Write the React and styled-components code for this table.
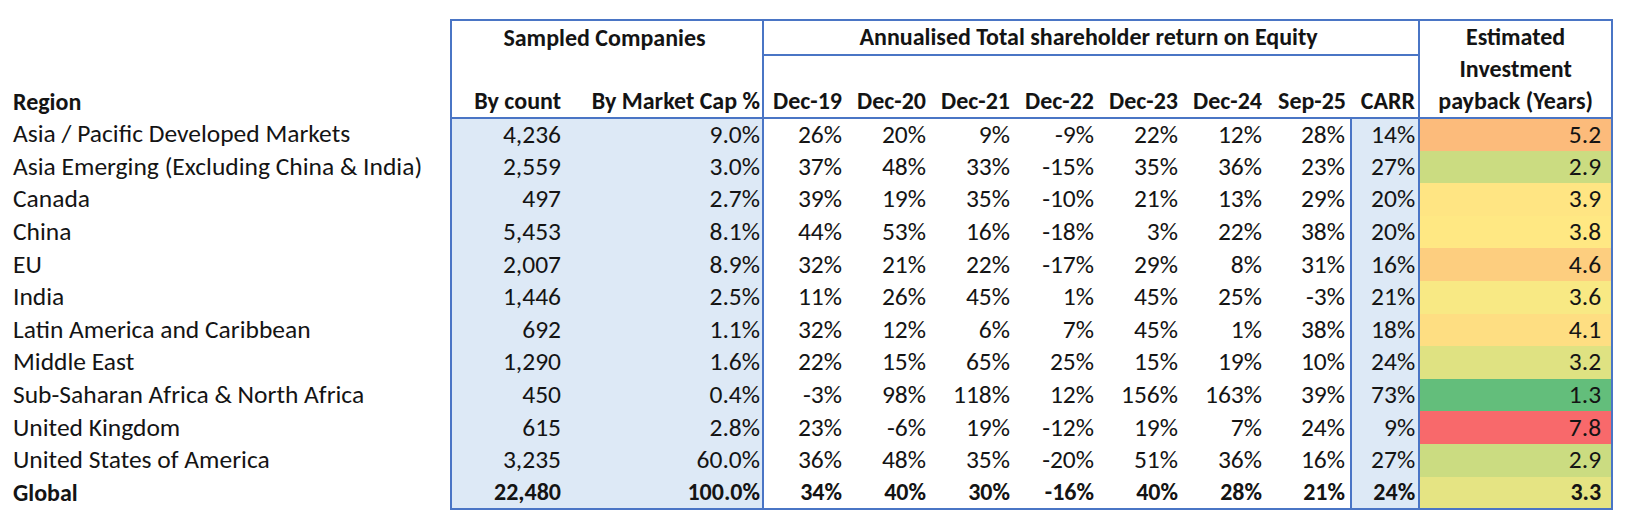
import React from 'react';
import styled, { createGlobalStyle, css } from 'styled-components';

const GlobalStyle = createGlobalStyle`
  body {
    margin: 0;
    background: #ffffff;
  }
`;

const LINE = '2px solid #4a75c5';
const FILL = '#dde9f6';

// Excel style 3 colour scale: green at min, yellow at median, red at max
const scaleColour = (v, values) => {
  const sorted = [...values].sort((a, b) => a - b);
  const n = sorted.length;
  const mid = n % 2 ? sorted[(n - 1) / 2] : (sorted[n / 2 - 1] + sorted[n / 2]) / 2;
  const lo = sorted[0];
  const hi = sorted[n - 1];
  const green = [99, 190, 123];
  const yellow = [255, 235, 132];
  const red = [248, 105, 107];
  const mix = (a, b, t) => a.map((c, i) => Math.round(c + (b[i] - c) * t));
  const rgb = v <= mid ? mix(green, yellow, (v - lo) / (mid - lo)) : mix(yellow, red, (v - mid) / (hi - mid));
  return `rgb(${rgb.join(',')})`;
};

const edges = (p) => css`
  border-top: ${p.$e?.includes('t') ? LINE : 'none'};
  border-right: ${p.$e?.includes('r') ? LINE : 'none'};
  border-bottom: ${p.$e?.includes('b') ? LINE : 'none'};
  border-left: ${p.$e?.includes('l') ? LINE : 'none'};
`;

const Page = styled.div`
  padding-top: 19px;
  font-family: Carlito, Calibri, Lato, 'Liberation Sans', sans-serif;
  font-size: 25.5px;
  color: #141414;
`;

const Table = styled.table`
  border-collapse: collapse;
  table-layout: fixed;
  width: 1612px;
`;

const HeadCell = styled.th`
  font-weight: 700;
  font-size: 24px;
  white-space: nowrap;
  line-height: 32px;
  padding: 0 ${(p) => p.$pr ?? 5}px 0 ${(p) => p.$pl ?? 0}px;
  text-align: ${(p) => p.$align || 'right'};
  vertical-align: ${(p) => p.$valign || 'bottom'};
  ${edges}
`;

const TitleRow = styled.tr`
  height: 32px;
`;

const LabelRow = styled.tr`
  height: 62px;
`;

const BodyRow = styled.tr`
  height: 32.6px;
  font-weight: ${(p) => (p.$total ? 700 : 400)};
  font-size: ${(p) => (p.$total ? '24px' : 'inherit')};
`;

const Cell = styled.td`
  white-space: nowrap;
  line-height: 30px;
  padding: 0 ${(p) => p.$pr ?? 5}px 0 ${(p) => p.$pl ?? 0}px;
  text-align: ${(p) => p.$align || 'right'};
  background: ${(p) => p.$bg || 'transparent'};
  ${edges}
`;

const years = ['Dec-19', 'Dec-20', 'Dec-21', 'Dec-22', 'Dec-23', 'Dec-24', 'Sep-25'];

const rows = [
  { region: 'Asia / Pacific Developed Markets', count: '4,236', cap: '9.0%', tsr: ['26%', '20%', '9%', '-9%', '22%', '12%', '28%'], carr: '14%', payback: 5.2 },
  { region: 'Asia Emerging (Excluding China & India)', count: '2,559', cap: '3.0%', tsr: ['37%', '48%', '33%', '-15%', '35%', '36%', '23%'], carr: '27%', payback: 2.9 },
  { region: 'Canada', count: '497', cap: '2.7%', tsr: ['39%', '19%', '35%', '-10%', '21%', '13%', '29%'], carr: '20%', payback: 3.9 },
  { region: 'China', count: '5,453', cap: '8.1%', tsr: ['44%', '53%', '16%', '-18%', '3%', '22%', '38%'], carr: '20%', payback: 3.8 },
  { region: 'EU', count: '2,007', cap: '8.9%', tsr: ['32%', '21%', '22%', '-17%', '29%', '8%', '31%'], carr: '16%', payback: 4.6 },
  { region: 'India', count: '1,446', cap: '2.5%', tsr: ['11%', '26%', '45%', '1%', '45%', '25%', '-3%'], carr: '21%', payback: 3.6 },
  { region: 'Latin America and Caribbean', count: '692', cap: '1.1%', tsr: ['32%', '12%', '6%', '7%', '45%', '1%', '38%'], carr: '18%', payback: 4.1 },
  { region: 'Middle East', count: '1,290', cap: '1.6%', tsr: ['22%', '15%', '65%', '25%', '15%', '19%', '10%'], carr: '24%', payback: 3.2 },
  { region: 'Sub-Saharan Africa & North Africa', count: '450', cap: '0.4%', tsr: ['-3%', '98%', '118%', '12%', '156%', '163%', '39%'], carr: '73%', payback: 1.3 },
  { region: 'United Kingdom', count: '615', cap: '2.8%', tsr: ['23%', '-6%', '19%', '-12%', '19%', '7%', '24%'], carr: '9%', payback: 7.8 },
  { region: 'United States of America', count: '3,235', cap: '60.0%', tsr: ['36%', '48%', '35%', '-20%', '51%', '36%', '16%'], carr: '27%', payback: 2.9 },
  { region: 'Global', count: '22,480', cap: '100.0%', tsr: ['34%', '40%', '30%', '-16%', '40%', '28%', '21%'], carr: '24%', payback: 3.3, total: true },
];

const paybacks = rows.map((r) => r.payback);

export default function App() {
  return (
    <Page>
      <GlobalStyle />
      <Table>
        <colgroup>
          <col style={{ width: 451 }} />
          <col style={{ width: 119 }} />
          <col style={{ width: 193 }} />
          {years.map((y) => (
            <col key={y} style={{ width: 84 }} />
          ))}
          <col style={{ width: 68 }} />
          <col style={{ width: 193 }} />
        </colgroup>
        <thead>
          <TitleRow>
            <HeadCell rowSpan={2} $align="left" $pl={13}>
              Region
            </HeadCell>
            <HeadCell colSpan={2} $align="center" $valign="middle" $e="tlr">
              Sampled Companies
            </HeadCell>
            <HeadCell colSpan={8} $align="center" $valign="middle" $e="tbr">
              Annualised Total shareholder return on Equity
            </HeadCell>
            <HeadCell rowSpan={2} $align="center" $valign="middle" $pr={0} $e="tlrb">
              Estimated
              <br />
              Investment
              <br />
              payback (Years)
            </HeadCell>
          </TitleRow>
          <LabelRow>
            <HeadCell $e="lb" $pr={9}>By count</HeadCell>
            <HeadCell $e="rb" $pr={2}>By Market Cap %</HeadCell>
            {years.map((y) => (
              <HeadCell key={y} $e="b">{y}</HeadCell>
            ))}
            <HeadCell $e="rb" $pr={3}>CARR</HeadCell>
          </LabelRow>
        </thead>
        <tbody>
          {rows.map((r, i) => {
            const last = i === rows.length - 1 ? 'b' : '';
            return (
              <BodyRow key={r.region} $total={r.total}>
                <Cell $align="left" $pl={13}>{r.region}</Cell>
                <Cell $bg={FILL} $e={'l' + last} $pr={9}>{r.count}</Cell>
                <Cell $bg={FILL} $e={'r' + last} $pr={2}>{r.cap}</Cell>
                {r.tsr.map((v, j) => (
                  <Cell key={j} $e={last}>{v}</Cell>
                ))}
                <Cell $bg={FILL} $e={'lr' + last} $pr={3}>{r.carr}</Cell>
                <Cell $bg={scaleColour(r.payback, paybacks)} $e={'r' + last} $pr={10}>
                  {r.payback.toFixed(1)}
                </Cell>
              </BodyRow>
            );
          })}
        </tbody>
      </Table>
    </Page>
  );
}
